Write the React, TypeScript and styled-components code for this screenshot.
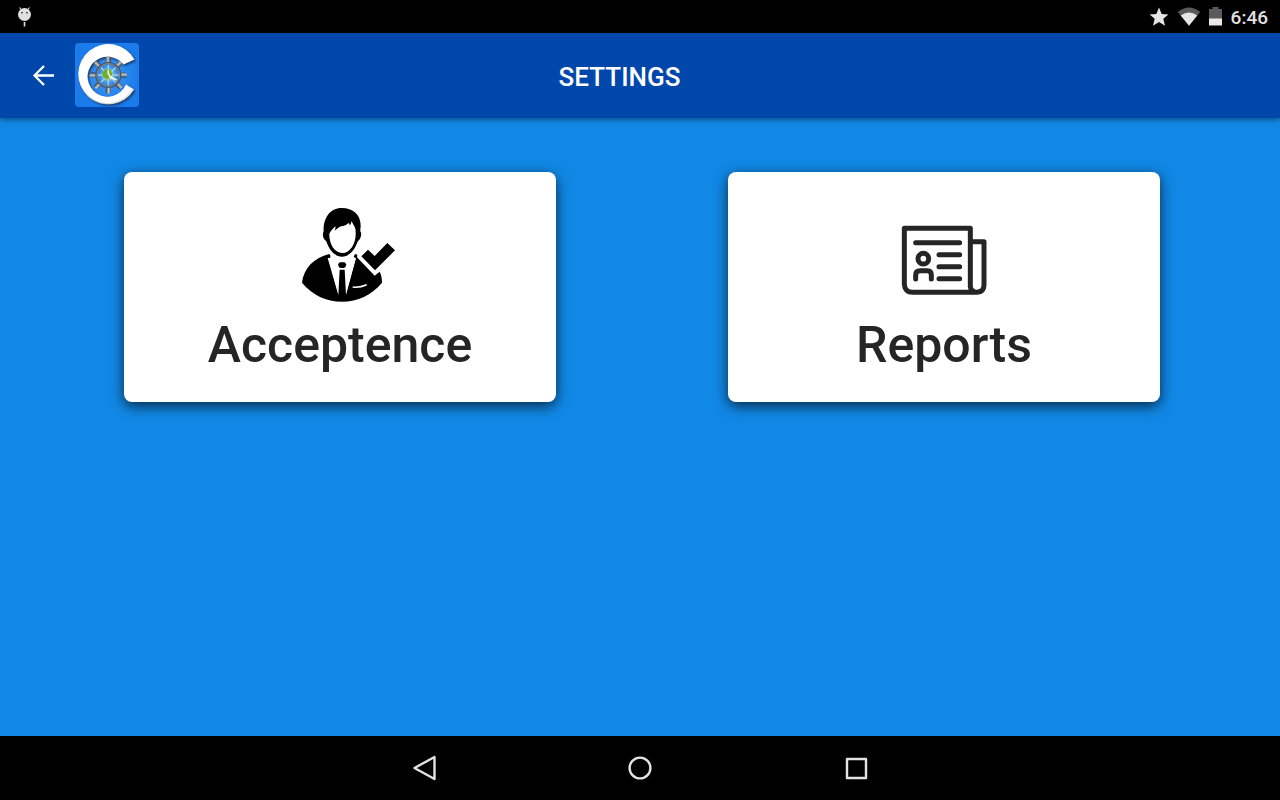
import React from "react";
import styled, { createGlobalStyle } from "styled-components";

const GlobalStyle = createGlobalStyle`
  *, *::before, *::after { box-sizing: border-box; }
  body {
    margin: 0;
    background: #000;
    font-family: Roboto, "Liberation Sans", sans-serif;
  }
`;

const Screen = styled.div`
  display: flex;
  flex-direction: column;
  min-height: 100vh;
`;

const StatusBar = styled.div`
  display: flex;
  align-items: center;
  justify-content: space-between;
  height: 33px;
  padding: 0 12px 0 16px;
  background: #000;
`;

const StatusIcons = styled.div`
  display: flex;
  align-items: center;
  gap: 8px;
`;

const Clock = styled.time`
  color: #e0e0e0;
  font-size: 19px;
  font-weight: 500;
  line-height: 24px;
  padding: 2px 0 0 1px;
`;

const AppBar = styled.header`
  display: flex;
  align-items: center;
  height: 85px;
  padding: 0 180px 2px 28px;
  background: #0047ab;
  box-shadow: 0 2px 5px rgba(0, 0, 0, 0.4);
  z-index: 1;
`;

const BackButton = styled.button`
  display: flex;
  width: 32px;
  height: 32px;
  margin-right: 15px;
  padding: 0;
  border: 0;
  background: none;
  cursor: pointer;
`;

const Title = styled.h1`
  flex: 1;
  margin: 0;
  padding-top: 5px;
  color: #fff;
  font-size: 26px;
  font-weight: 500;
  line-height: 32px;
  text-align: center;
`;

const Content = styled.main`
  flex: 1;
  display: grid;
  grid-template-columns: 1fr 1fr;
  align-items: start;
  gap: 172px;
  padding: 54px 120px 54px 124px;
  background: #1188e6;
`;

const Card = styled.button`
  display: flex;
  flex-direction: column;
  align-items: center;
  gap: 7px;
  padding: 28px 16px 29px;
  border: 0;
  border-radius: 8px;
  background: #fff;
  box-shadow: 0 4px 14px rgba(0, 0, 0, 0.7);
  font-family: inherit;
  cursor: pointer;
`;

const CardLabel = styled.span`
  color: #252525;
  font-size: 50px;
  font-weight: 500;
  line-height: 56px;
`;

const NavBar = styled.nav`
  display: flex;
  align-items: center;
  justify-content: center;
  gap: 152px;
  height: 64px;
  background: #000;
`;

const NavButton = styled.button`
  display: flex;
  justify-content: center;
  width: 64px;
  padding: 0;
  border: 0;
  background: none;
  cursor: pointer;
`;

const DebugIcon = () => (
  <svg width="17" height="21" viewBox="0 0 17 21" aria-hidden="true">
    <path d="M3.5 1.5L5.5 4M13.5 1.5L11.5 4" stroke="#e0e0e0" strokeWidth="1.2" />
    <ellipse cx="8.5" cy="8.5" rx="6.5" ry="6.5" fill="#e0e0e0" />
    <circle cx="6" cy="6.7" r="0.8" fill="#000" />
    <circle cx="11" cy="6.7" r="0.8" fill="#000" />
    <path d="M8.5 16V20.5" stroke="#e0e0e0" strokeWidth="1.6" />
  </svg>
);

const StarIcon = () => (
  <svg width="20" height="20" viewBox="0 0 20 20" aria-hidden="true">
    <path
      d="M10 .5L12.700 6.900L19.400 7.400L14.300 11.800L16 18.700L10 15L4 18.700L5.700 11.800L.6 7.400L7.300 6.900Z"
      fill="#e6e6e6"
    />
  </svg>
);

const WifiIcon = () => (
  <svg width="24" height="20" viewBox="0 0 24 20" aria-hidden="true">
    <path d="M.8 5Q12-4 23.200 5L12 18.800Z" fill="#5a5a5a" />
    <path d="M3.800 8.400Q12 2.800 20.200 8.400L12 18.800Z" fill="#e6e6e6" />
  </svg>
);

const BatteryIcon = () => (
  <svg width="13" height="20" viewBox="0 0 13 20" aria-hidden="true">
    <path d="M3.500 0H9.500V2H13V12H0V2H3.500Z" fill="#5a5a5a" />
    <path d="M0 11.500H13V18.500H0Z" fill="#e9e9e9" />
  </svg>
);

const BackArrow = () => (
  <svg width="32" height="32" viewBox="0 0 32 32" aria-hidden="true">
    <path d="M26 16.500H7M16 7L6.500 16.500L16 26" fill="none" stroke="#fff" strokeWidth="2.300" />
  </svg>
);

const spokes = [0, 45, 90, 135, 180, 225, 270, 315];

const Logo = () => (
  <svg width="64" height="64" viewBox="0 0 64 64" role="img" aria-label="Logo">
    <defs>
      <linearGradient id="metal" x1="0" x2="1" y1="0" y2="0">
        <stop offset="0" stopColor="#59616b" />
        <stop offset="0.450" stopColor="#c3cad2" />
        <stop offset="1" stopColor="#2b323b" />
      </linearGradient>
      <radialGradient id="tile">
        <stop offset="0" stopColor="#3f98f5" />
        <stop offset="1" stopColor="#1c7bea" />
      </radialGradient>
      <filter id="soft" x="-20%" y="-20%" width="140%" height="140%">
        <feGaussianBlur stdDeviation="1.300" />
      </filter>
      <filter id="glow" x="-50%" y="-50%" width="200%" height="200%">
        <feGaussianBlur stdDeviation="1" />
      </filter>
      <clipPath id="tileClip">
        <rect width="64" height="64" rx="4" />
      </clipPath>
    </defs>
    <g clipPath="url(#tileClip)">
      <rect width="64" height="64" fill="url(#tile)" />
      <path
        d="M59.500 16.500A30 30 0 1 0 59 46.500L51 41.500A20 20 0 1 1 48.500 21.500Z"
        transform="translate(1.200 1.500)"
        fill="#152b48"
        opacity="0.850"
        filter="url(#soft)"
      />
      <path d="M59.500 16.500A30 30 0 1 0 59 46.500L51 41.500A20 20 0 1 1 48.500 21.500Z" fill="#fff" />
      <path
        d="M58 46.500A29.500 29.500 0 0 1 12 52"
        fill="none"
        stroke="#c8ccd0"
        strokeWidth="1.500"
        opacity="0.600"
      />
      {spokes.map((angle) => (
        <g key={angle} transform={`rotate(${angle} 33.300 32)`}>
          <rect x="32.500" y="20" width="1.600" height="10" fill="#c3d6e6" opacity="0.800" />
          <rect x="30.800" y="13.500" width="5" height="6.500" rx="1.500" fill="url(#metal)" />
        </g>
      ))}
      <circle cx="33.300" cy="32" r="11.800" fill="none" stroke="#465767" strokeWidth="2.600" />
      <circle cx="33.300" cy="32" r="11.400" fill="none" stroke="#8fa2b2" strokeWidth="0.800" />
      <circle cx="33" cy="31.800" r="6.500" fill="#a9dba0" opacity="0.700" filter="url(#glow)" />
      <circle cx="32.300" cy="31" r="4.800" fill="#6fae2c" />
      <path d="M33 27V31.500L42 37L35 35Z" fill="#eef8e8" stroke="#eef8e8" strokeWidth="1" />
    </g>
  </svg>
);

const AcceptanceIcon = () => (
  <svg width="110" height="110" viewBox="-15 15 330 330" aria-hidden="true">
    <path
      fillRule="evenodd"
      d="M155 39C190 39 213 60 212 94C212 100 210 104 211 109C215 114 214 123 210 131C207 136 204 137 202 142C193 168 176 185 156 185C136 185 119 168 110 142C108 137 104 136 101 130C98 122 98 114 101 109C99 72 118 39 155 39ZM193 94C190 89 187 84 185 78C184 83 182 88 179 92C179 87 178 86 176 84C170 90 162 93 153 94C147 96 142 101 134 107C136 103 137 98 136 94C130 100 123 106 118 116C117 145 132 174 157 174C182 174 199 143 197 111C197 105 196 99 193 94Z"
    />
    <path d="M118 177L121 181V188L115 190L145 297H168L197 190L191 185L195 177L202 179L201 187L254 242L269 230C274 239 276 250 276 263C244 301 204 320 156 320C108 320 68 301 36 263C41 220 72 188 118 177Z" />
    <path d="M113 189H198L168 299H145Z" fill="#fff" />
    <path d="M149 202H164L169 208L166 217L161 219H152L147 217L144 208ZM149 224H164L168 300H145Z" />
    <path d="M188 276Q208 279 230 269" fill="none" stroke="#fff" strokeWidth="5" />
    <path d="M214 184L234 164L254 183L292 144L315 166L255 226Z" />
  </svg>
);

const ReportsIcon = () => (
  <svg
    width="110"
    height="110"
    viewBox="12 -30 330 330"
    fill="none"
    stroke="#252525"
    strokeWidth="15"
    strokeLinecap="round"
    strokeLinejoin="round"
    aria-hidden="true"
  >
    <path d="M58 55H256V230Q258 247 276 247Q297 245 297 225V95H257M58 55V223Q60 247 82 247H276" />
    <path d="M92 98H224M162 134H224M162 170H224M162 206H224" />
    <circle cx="115" cy="146" r="16" />
    <path d="M92 207V195Q92 182 105 182H127Q139 182 139 195V207" />
  </svg>
);

export default function App() {
  return (
    <Screen>
      <GlobalStyle />
      <StatusBar>
        <DebugIcon />
        <StatusIcons>
          <StarIcon />
          <WifiIcon />
          <BatteryIcon />
          <Clock>6:46</Clock>
        </StatusIcons>
      </StatusBar>
      <AppBar>
        <BackButton type="button" aria-label="Back">
          <BackArrow />
        </BackButton>
        <Logo />
        <Title>SETTINGS</Title>
      </AppBar>
      <Content>
        <Card type="button">
          <AcceptanceIcon />
          <CardLabel>Acceptence</CardLabel>
        </Card>
        <Card type="button">
          <ReportsIcon />
          <CardLabel>Reports</CardLabel>
        </Card>
      </Content>
      <NavBar aria-label="System">
        <NavButton type="button" aria-label="Back">
          <svg width="28" height="28" viewBox="0 0 28 28" fill="none" stroke="#e3e3e3" strokeWidth="2.400" strokeLinejoin="round">
            <path d="M24.500 3V25L4.500 14Z" />
          </svg>
        </NavButton>
        <NavButton type="button" aria-label="Home">
          <svg width="28" height="28" viewBox="0 0 28 28" fill="none" stroke="#e3e3e3" strokeWidth="2.400">
            <circle cx="14" cy="14" r="10.400" />
          </svg>
        </NavButton>
        <NavButton type="button" aria-label="Overview">
          <svg width="28" height="28" viewBox="0 0 28 28" fill="none" stroke="#e3e3e3" strokeWidth="2.400" strokeLinejoin="round">
            <path d="M5 5H24V24H5Z" />
          </svg>
        </NavButton>
      </NavBar>
    </Screen>
  );
}
